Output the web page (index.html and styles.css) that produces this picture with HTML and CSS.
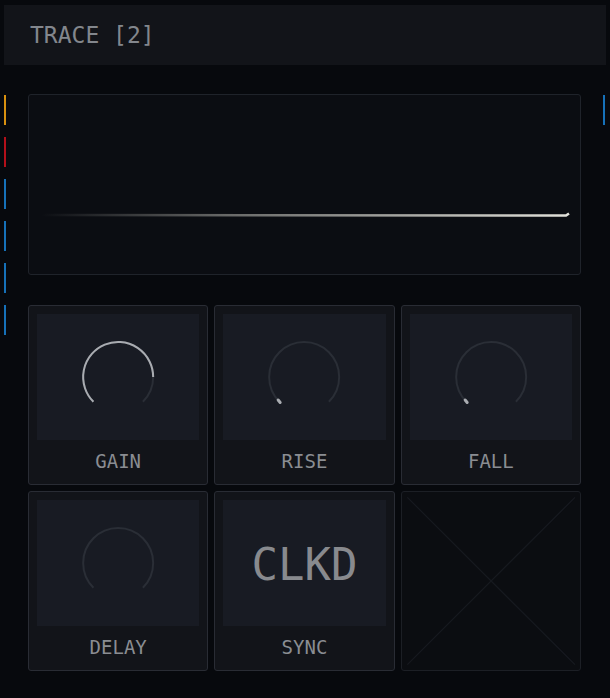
FILE: index.html
```html
<!DOCTYPE html>
<html lang="en">
	<head>
		<meta charset="utf-8">
		<title>Trace [2]</title>
		<link rel="stylesheet" href="styles.css">
	</head>
	<body>
		<div class="module">
			<header class="title-bar">
				<h1>TRACE [2]</h1>
			</header>

			<div class="main">
				<ul class="rail">
					<li class="mark orange"></li>
					<li class="mark red"></li>
					<li class="mark blue"></li>
					<li class="mark blue"></li>
					<li class="mark blue"></li>
					<li class="mark blue"></li>
				</ul>

				<div class="content">
					<div class="scope">
						<svg class="trace" viewBox="0 0 551 179" preserveAspectRatio="none">
							<defs>
								<linearGradient id="fade" x1="0" x2="1" y1="0" y2="0">
									<stop offset="0" stop-color="#d9d8d0" stop-opacity="0"/>
									<stop offset="0.35" stop-color="#d9d8d0" stop-opacity="0.45"/>
									<stop offset="1" stop-color="#e2e1da" stop-opacity="1"/>
								</linearGradient>
							</defs>
							<path d="M12 120 L537 120.5 L540 118.5" fill="none" stroke="url(#fade)" stroke-width="2.6"/>
						</svg>
					</div>

					<ul class="controls">
						<li class="cell">
							<div class="display">
								<svg class="knob" viewBox="0 0 162 126">
									<path class="track" d="M56.25 87.75 A35 35 0 1 1 105.75 87.75"/>
									<path class="value" d="M56.25 87.75 A35 35 0 1 1 116 63"/>
								</svg>
							</div>
							<span class="label">GAIN</span>
						</li>
						<li class="cell">
							<div class="display">
								<svg class="knob" viewBox="0 0 162 126">
									<path class="track" d="M56.25 87.75 A35 35 0 1 1 105.75 87.75"/>
									<path class="notch" d="M57 88.5 L55 86"/>
								</svg>
							</div>
							<span class="label">RISE</span>
						</li>
						<li class="cell">
							<div class="display">
								<svg class="knob" viewBox="0 0 162 126">
									<path class="track" d="M56.25 87.75 A35 35 0 1 1 105.75 87.75"/>
									<path class="notch" d="M57 88.5 L55 86"/>
								</svg>
							</div>
							<span class="label">FALL</span>
						</li>
						<li class="cell">
							<div class="display">
								<svg class="knob" viewBox="0 0 162 126">
									<path class="track" d="M56.25 87.75 A35 35 0 1 1 105.75 87.75"/>
								</svg>
							</div>
							<span class="label">DELAY</span>
						</li>
						<li class="cell">
							<div class="display">
								<span class="readout">CLKD</span>
							</div>
							<span class="label">SYNC</span>
						</li>
						<li class="cell empty">
							<svg class="cross" viewBox="0 0 100 100" preserveAspectRatio="none">
								<line x1="3" y1="3" x2="97" y2="97"/>
								<line x1="97" y1="3" x2="3" y2="97"/>
							</svg>
						</li>
					</ul>
				</div>

				<ul class="rail">
					<li class="mark blue"></li>
				</ul>
			</div>
		</div>
	</body>
</html>
```

FILE: styles.css
```css
*, *:after, *:before { box-sizing: border-box; }

body {
	margin: 0;
	background: #07090d;
	font-family: 'DejaVu Sans Mono', monospace;
	color: #8b8e93;
}

ul {
	list-style: none;
	margin: 0;
	padding: 0;
}

/*************************************
Title bar
**************************************/

.module {
	padding-top: 5px;
}

.title-bar {
	margin: 0 4px;
	height: 60px;
	background: #121419;
	display: flex;
	align-items: center;
	padding-left: 26px;
}

.title-bar h1 {
	margin: 0;
	font-size: 23px;
	font-weight: normal;
	color: #83878d;
}

/*************************************
Side rails with colour marks
**************************************/

.main {
	display: flex;
	padding: 29px 5px 0 4px;
}

.rail {
	width: 2px;
	padding-top: 1px;
	display: flex;
	flex-direction: column;
	gap: 12px;
}

.mark {
	width: 2px;
	height: 30px;
}

.mark.orange { background: #d8900f; }
.mark.red { background: #b3101a; }
.mark.blue { background: #1671b8; }

.content {
	flex: 1;
	margin: 0 22px;
}

/*************************************
Scope
**************************************/

.scope {
	height: 181px;
	background: #0b0d12;
	border: 1px solid #1f232a;
	border-radius: 3px;
}

.trace {
	display: block;
	width: 100%;
	height: 100%;
}

/*************************************
Control grid
**************************************/

.controls {
	margin-top: 30px;
	display: grid;
	grid-template-columns: repeat(3, 1fr);
	grid-auto-rows: 180px;
	gap: 6px;
}

.cell {
	background: #121419;
	border: 1px solid #292c34;
	border-radius: 3px;
	padding: 8px 8px 0;
	display: flex;
	flex-direction: column;
}

.display {
	height: 126px;
	background: #181b23;
	display: flex;
	align-items: center;
	justify-content: center;
}

.knob {
	display: block;
	width: 100%;
	height: 100%;
}

.knob path {
	fill: none;
	stroke-width: 2;
}

.knob .track { stroke: #2a2e36; }
.knob .value { stroke: #a9acb1; }
.knob .notch { stroke: #a9acb1; stroke-width: 3; stroke-linecap: round; }

.readout {
	font-size: 44px;
	color: #888a8e;
	padding-top: 2px;
}

.label {
	flex: 1;
	display: flex;
	align-items: center;
	justify-content: center;
	font-size: 19px;
	color: #8a8d92;
	padding-bottom: 3px;
}

.cell.empty {
	background: #0b0d11;
	border-color: #1c1f25;
	padding: 0;
}

.cross {
	width: 100%;
	height: 100%;
}

.cross line {
	stroke: #171a20;
	stroke-width: 1.2;
	vector-effect: non-scaling-stroke;
}
```
